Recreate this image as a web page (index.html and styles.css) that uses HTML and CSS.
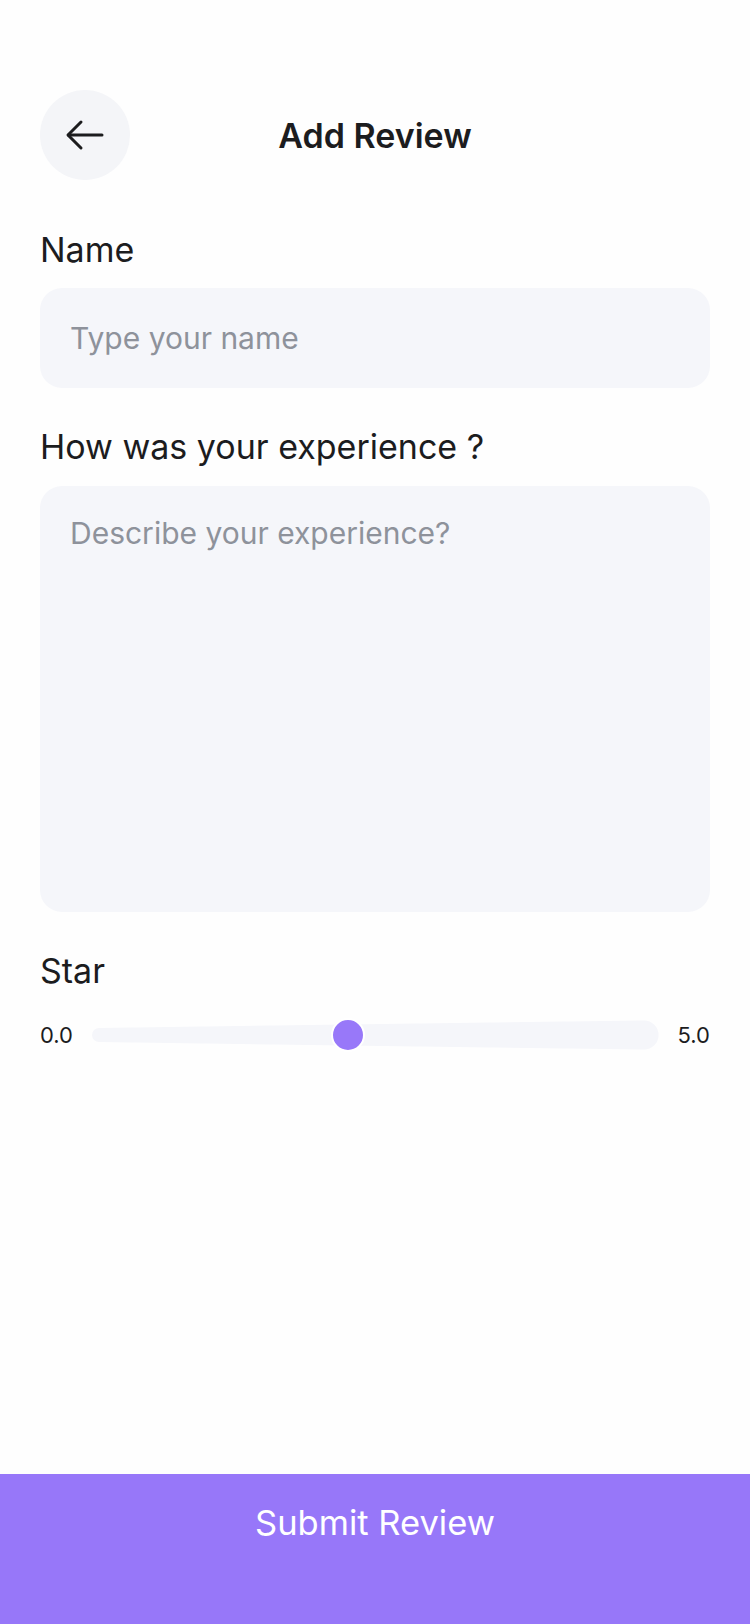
FILE: index.html
```html
<!DOCTYPE html>
<html lang="en">
<head>
<meta charset="utf-8">
<title>Add Review</title>
<link rel="stylesheet" href="styles.css">
</head>
<body>
<div class="screen">
  <main class="content">
    <header class="header">
      <button class="back" aria-label="Back">
        <svg width="40" height="32" viewBox="0 0 40 32" fill="none" stroke="#1c1c1e" stroke-width="3" stroke-linecap="round" stroke-linejoin="round">
          <path d="M37 16H3.5"/>
          <path d="M16 3L3 16L16 29"/>
        </svg>
      </button>
      <h1 class="title">Add Review</h1>
      <span class="spacer"></span>
    </header>

    <section class="field">
      <label class="label">Name</label>
      <div class="input"><span class="placeholder">Type your name</span></div>
    </section>

    <section class="field field-exp">
      <label class="label">How was your experience ?</label>
      <div class="textarea"><span class="placeholder">Describe your experience?</span></div>
    </section>

    <section class="field field-star">
      <label class="label">Star</label>
      <div class="slider">
        <span class="bound">0.0</span>
        <div class="track">
          <svg class="track-svg" viewBox="0 0 563 30" preserveAspectRatio="none">
            <path d="M7 8 L548.5 0.5 A14.5 14.5 0 0 1 548.5 29.5 L7 22 A7 7 0 0 1 7 8 Z" fill="#f5f6fa"/>
          </svg>
          <span class="thumb" style="left: 45.2%"></span>
        </div>
        <span class="bound">5.0</span>
      </div>
    </section>
  </main>

  <footer class="footer">
    <div class="submit" role="button">Submit Review</div>
  </footer>
</div>
</body>
</html>
```

FILE: styles.css
```css
* {
  box-sizing: border-box;
}

html, body {
  margin: 0;
  padding: 0;
}

body {
  background: #fefefe;
  font-family: Inter, "Noto Sans", "Liberation Sans", sans-serif;
  color: #1c1c1e;
}

.screen {
  width: 750px;
  height: 1624px;
  display: flex;
  flex-direction: column;
}

.content {
  flex: 1;
  padding: 90px 40px 0;
  display: flex;
  flex-direction: column;
}

.header {
  display: grid;
  grid-template-columns: 90px 1fr 90px;
  align-items: center;
  height: 90px;
}

.back {
  width: 90px;
  height: 90px;
  border-radius: 50%;
  border: none;
  background: #f4f5f8;
  display: flex;
  align-items: center;
  justify-content: center;
  padding: 0;
}

.title {
  margin: 0;
  padding-top: 2px;
  text-align: center;
  font-size: 34px;
  font-weight: 600;
  line-height: 40px;
  color: #1c1c1e;
}

.field {
  display: flex;
  flex-direction: column;
  margin-top: 50px;
}

.field-exp {
  margin-top: 39px;
}

.field-star {
  margin-top: 39px;
}

.label {
  font-size: 34px;
  line-height: 40px;
  font-weight: 400;
  color: #1c1c1e;
}

.input {
  margin-top: 18px;
  height: 100px;
  background: #f5f6fa;
  border-radius: 22px;
  display: flex;
  align-items: center;
  padding: 0 30px;
}

.textarea {
  margin-top: 19px;
  height: 426px;
  background: #f5f6fa;
  border-radius: 22px;
  padding: 29px 30px;
}

.placeholder {
  font-size: 30px;
  line-height: 36px;
  color: #8e929b;
}

.slider {
  margin-top: 27px;
  display: flex;
  align-items: center;
  gap: 19px;
  height: 33px;
}

.bound {
  font-size: 22px;
  line-height: 26px;
  color: #1c1c1e;
}

.track {
  position: relative;
  flex: 1;
  height: 30px;
}

.track-svg {
  display: block;
  width: 100%;
  height: 30px;
}

.thumb {
  position: absolute;
  top: 50%;
  width: 34px;
  height: 34px;
  border-radius: 50%;
  background: #9878f9;
  border: 2px solid #ffffff;
  transform: translate(-50%, -50%);
}

.footer {
  height: 150px;
  background: #9777f9;
  padding-top: 29px;
}

.submit {
  color: #ffffff;
  font-size: 34.5px;
  line-height: 40px;
  text-align: center;
}
```
